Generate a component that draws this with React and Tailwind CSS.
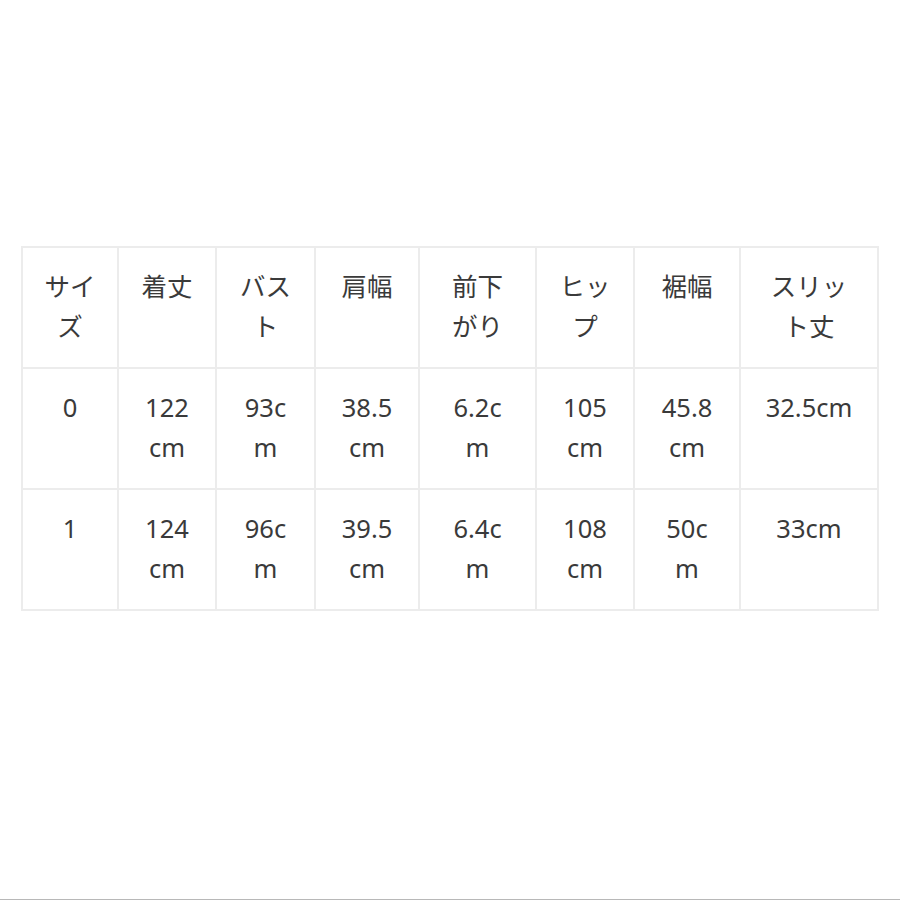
import React from "react";

const cols = ["w-[96px]", "w-[98px]", "w-[99px]", "w-[104px]", "w-[117px]", "w-[98px]", "w-[106px]", "w-[138px]"];

const rows = [
  [["サイ", "ズ"], ["着丈"], ["バス", "ト"], ["肩幅"], ["前下", "がり"], ["ヒッ", "プ"], ["裾幅"], ["スリッ", "ト丈"]],
  [["0"], ["122", "cm"], ["93c", "m"], ["38.5", "cm"], ["6.2c", "m"], ["105", "cm"], ["45.8", "cm"], ["32.5cm"]],
  [["1"], ["124", "cm"], ["96c", "m"], ["39.5", "cm"], ["6.4c", "m"], ["108", "cm"], ["50c", "m"], ["33cm"]],
];

const Cell = ({ lines, w }) => (
  <div className={`${w} h-[121px] shrink-0 border-r-2 border-b-2 border-[#ececec] pt-[18px] flex flex-col items-center`}>
    {lines.map((l, i) => (
      <div key={i} className="whitespace-nowrap leading-[40px] text-[25.5px]">
        {l}
      </div>
    ))}
  </div>
);

export default function App() {
  return (
    <div
      className="h-[900px] w-[900px] bg-white flex flex-col text-[#3a3a3a]"
      style={{ fontFamily: '"Noto Sans", "Noto Sans CJK JP", sans-serif' }}
    >
      <div className="mt-[246px] ml-[21px] flex flex-col w-fit border-l-2 border-t-2 border-[#ececec]">
        {rows.map((r, i) => (
          <div key={i} className="flex">
            {r.map((lines, j) => (
              <Cell key={j} lines={lines} w={cols[j]} />
            ))}
          </div>
        ))}
      </div>
      <div className="flex-1" />
      <div className="h-px bg-[#b8b8b8]" />
    </div>
  );
}
